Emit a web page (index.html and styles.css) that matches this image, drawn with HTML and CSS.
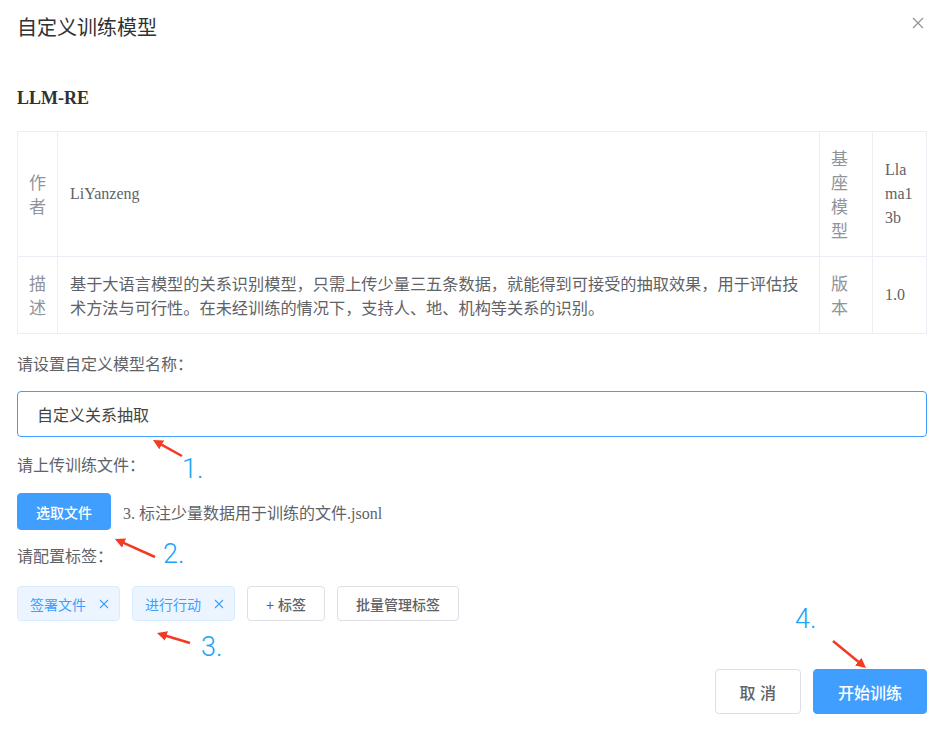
FILE: index.html
```html
<!DOCTYPE html>
<html lang="zh-CN">
<head>
    <meta charset="UTF-8" />
    <meta name="viewport" content="width=device-width, initial-scale=1.0" />
    <title>自定义训练模型</title>
    <link rel="stylesheet" href="styles.css">
</head>
<body>
    <div class="dialog">
        <div class="dialog-header">
            <span class="dialog-title">自定义训练模型</span>
            <button class="dialog-close" aria-label="关闭">
                <svg width="12" height="12" viewBox="0 0 12 12"><path d="M1 1 L11 11 M11 1 L1 11" stroke="#909399" stroke-width="1.2" fill="none"/></svg>
            </button>
        </div>

        <div class="dialog-body">
            <h3 class="model-name">LLM-RE</h3>

            <table class="desc-table">
                <colgroup>
                    <col style="width:40px">
                    <col>
                    <col style="width:53px">
                    <col style="width:54px">
                </colgroup>
                <tr>
                    <td class="desc-label">作者</td>
                    <td class="desc-content latin">LiYanzeng</td>
                    <td class="desc-label">基座模型</td>
                    <td class="desc-content latin break">Llama13b</td>
                </tr>
                <tr>
                    <td class="desc-label">描述</td>
                    <td class="desc-content">基于大语言模型的关系识别模型，只需上传少量三五条数据，就能得到可接受的抽取效果，用于评估技术方法与可行性。在未经训练的情况下，支持人、地、机构等关系的识别。</td>
                    <td class="desc-label">版本</td>
                    <td class="desc-content latin">1.0</td>
                </tr>
            </table>

            <div class="form-label first">请设置自定义模型名称：</div>
            <input class="name-input" type="text" value="自定义关系抽取" />

            <div class="form-label">请上传训练文件：</div>
            <div class="upload-row">
                <button class="btn btn-primary btn-small">选取文件</button>
                <span class="file-name">3. 标注少量数据用于训练的文件.jsonl</span>
            </div>

            <div class="form-label">请配置标签：</div>
            <div class="tag-row">
                <span class="tag">签署文件
                    <svg class="tag-close" width="10" height="10" viewBox="0 0 10 10"><path d="M1 1 L9 9 M9 1 L1 9" stroke="#409eff" stroke-width="1.1" fill="none"/></svg>
                </span>
                <span class="tag">进行行动
                    <svg class="tag-close" width="10" height="10" viewBox="0 0 10 10"><path d="M1 1 L9 9 M9 1 L1 9" stroke="#409eff" stroke-width="1.1" fill="none"/></svg>
                </span>
                <button class="btn btn-default btn-small">+ 标签</button>
                <button class="btn btn-default btn-small">批量管理标签</button>
            </div>
        </div>

        <div class="dialog-footer">
            <button class="btn btn-default btn-large">取 消</button>
            <button class="btn btn-primary btn-large">开始训练</button>
        </div>

        <!-- annotations drawn over the screenshot -->
        <svg class="arrows" width="949" height="733" viewBox="0 0 949 733">
            <defs>
                <marker id="head" viewBox="0 0 10 10" refX="6" refY="5" markerWidth="4" markerHeight="4" orient="auto">
                    <path d="M0 0 L10 5 L0 10 z" fill="#f33a22"/>
                </marker>
            </defs>
            <g stroke="#f33a22" stroke-width="2.5" marker-end="url(#head)">
                <line x1="182" y1="456" x2="156.5" y2="441.9"/>
                <line x1="155" y1="557" x2="118.6" y2="540.6"/>
                <line x1="190" y1="643" x2="160.8" y2="634.2"/>
                <line x1="833" y1="641" x2="862.9" y2="665.5"/>
            </g>
        </svg>
        <span class="step step-1">1.</span>
        <span class="step step-2">2.</span>
        <span class="step step-3">3.</span>
        <span class="step step-4">4.</span>
    </div>
</body>
</html>
```

FILE: styles.css
```css
body {
    margin: 0;
    background: #fff;
    font-family: "Liberation Sans", "Noto Sans CJK SC", sans-serif;
    color: #606266;
}

.dialog {
    position: relative;
    width: 949px;
    height: 733px;
    box-sizing: border-box;
    overflow: hidden;
}

.dialog-header {
    display: flex;
    justify-content: space-between;
    align-items: flex-start;
    padding: 15px 25px 0 17px;
}

.dialog-title {
    font-family: "Noto Sans CJK SC", sans-serif;
    font-size: 20px;
    line-height: 24px;
    color: #303133;
}

.dialog-close {
    border: none;
    background: none;
    padding: 0;
    margin-top: 2px;
    width: 12px;
    height: 12px;
    display: flex;
    cursor: pointer;
}

.dialog-body {
    padding: 0 22px 0 17px;
}

.model-name {
    margin: 47px 0 0;
    font-family: "Liberation Serif", serif;
    font-size: 18px;
    line-height: 24px;
    font-weight: bold;
    color: #303133;
}

.desc-table {
    width: 100%;
    margin-top: 21px;
    border-collapse: collapse;
    table-layout: fixed;
}

.desc-table td {
    border: 1px solid #ebeef5;
    padding: 14px 12px;
    vertical-align: middle;
    font-family: "Noto Sans CJK SC", sans-serif;
    font-size: 17px;
    line-height: 24px;
}

.desc-label {
    color: #909399;
    padding-left: 11px !important;
}

.desc-content {
    color: #606266;
    font-size: 16.2px !important;
}

.desc-table .latin {
    font-family: "Liberation Serif", serif;
    font-size: 16px !important;
}

.break {
    word-break: break-all;
}

.form-label {
    margin-top: 17px;
    font-size: 16px;
    line-height: 20px;
    color: #606266;
}

.form-label.first {
    margin-top: 21px;
}

.name-input {
    display: block;
    box-sizing: border-box;
    width: 100%;
    height: 46px;
    margin-top: 16px;
    margin-bottom: 19px;
    padding: 0 19px;
    border: 1px solid #409eff;
    border-radius: 4px;
    outline: none;
    font-family: "Liberation Sans", "Noto Sans CJK SC", sans-serif;
    font-size: 16px;
    font-weight: normal;
    color: #444;
}

.name-input + .form-label {
    margin-top: 0;
}

.upload-row {
    display: flex;
    align-items: center;
    gap: 12px;
    margin-top: 17px;
}

.file-name {
    font-family: "Liberation Serif", "Noto Sans CJK SC", serif;
    font-size: 16px;
    color: #606266;
}

.tag-row {
    display: flex;
    align-items: center;
    gap: 12px;
    margin-top: 19px;
}

.tag {
    display: inline-flex;
    align-items: center;
    box-sizing: border-box;
    height: 35px;
    padding: 0 10px 0 12px;
    background: #ecf5ff;
    border: 1px solid #d9ecff;
    border-radius: 4px;
    font-size: 14px;
    color: #409eff;
}

.tag-close {
    margin-left: 13px;
}

.btn {
    box-sizing: border-box;
    border-radius: 4px;
    font-family: "Liberation Sans", "Noto Sans CJK SC", sans-serif;
    font-weight: 500;
    cursor: pointer;
}

.btn-small {
    height: 35px;
    padding: 0 18px;
    font-size: 14px;
}

.upload-row .btn-small {
    height: 37px;
}

.btn-large {
    height: 45px;
    padding: 0 24px;
    font-size: 16px;
}

.btn-primary {
    background: #409eff;
    border: 1px solid #409eff;
    color: #fff;
}

.btn-default {
    background: #fff;
    border: 1px solid #dcdfe6;
    color: #606266;
}

.dialog-footer {
    display: flex;
    justify-content: flex-end;
    gap: 12px;
    margin-top: 48px;
    padding-right: 22px;
}

.arrows {
    position: absolute;
    left: 0;
    top: 0;
    pointer-events: none;
}

.step {
    position: absolute;
    font-family: Roboto, "Liberation Sans", sans-serif;
    font-weight: 300;
    font-size: 27px;
    line-height: 27px;
    color: #1aa5f6;
}

.step-1 { left: 182px; top: 456px; }
.step-2 { left: 163px; top: 541px; }
.step-3 { left: 201px; top: 634px; }
.step-4 { left: 795px; top: 606px; }
```
